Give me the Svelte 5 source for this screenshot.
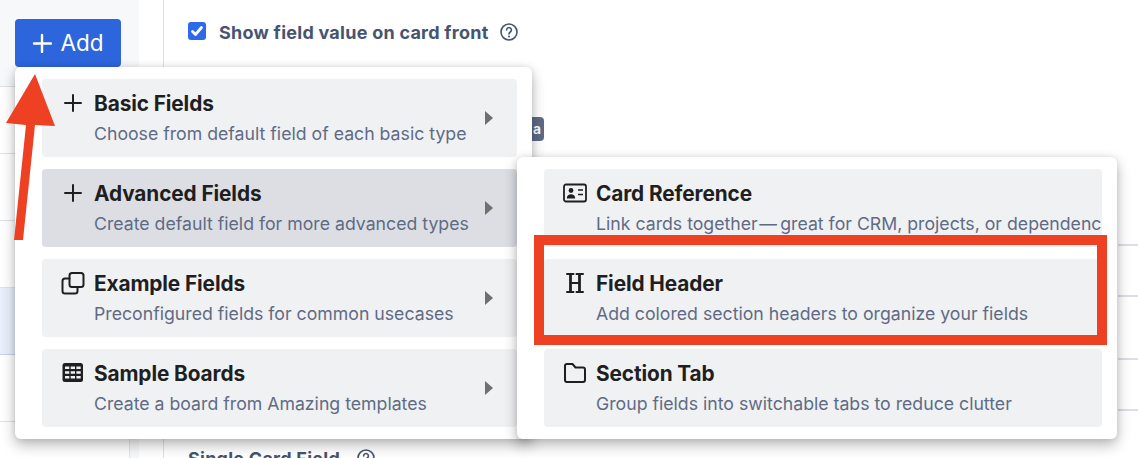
<script>
  const menu = [
    { id: 'plus', title: 'Basic Fields', sub: 'Choose from default field of each basic type' },
    { id: 'plus', title: 'Advanced Fields', sub: 'Create default field for more advanced types', active: true },
    { id: 'copy', title: 'Example Fields', sub: 'Preconfigured fields for common usecases' },
    { id: 'table', title: 'Sample Boards', sub: 'Create a board from Amazing templates' }
  ];
  const sub = [
    { id: 'card', title: 'Card Reference', sub: 'Link cards together\u200A—\u2009great for CRM, projects, or dependencies' },
    { id: 'header', title: 'Field Header', sub: 'Add colored section headers to organize your fields' },
    { id: 'folder', title: 'Section Tab', sub: 'Group fields into switchable tabs to reduce clutter' }
  ];
</script>

{#snippet icon(id)}
  <svg class="ico" viewBox="0 0 24 24" fill="none" stroke="#1f1f1f" stroke-width="2" stroke-linecap="round" stroke-linejoin="round">
    {#if id === 'plus'}
      <path d="M12 4v16M4 12h16" />
    {:else if id === 'copy'}
      <rect x="8.500" y="2" width="14" height="14" rx="2.500" />
      <path d="M8.500 7.500H4a2.500 2.500 0 0 0-2.500 2.500v10A2.500 2.500 0 0 0 4 22.500h10a2.500 2.500 0 0 0 2.500-2.500V16" />
    {:else if id === 'table'}
      <rect x="1.500" y="2" width="20.500" height="19" rx="2.500" fill="#1f1f1f" stroke="none" />
      <path d="M4 5.500h4.300v2.500H4zM9.700 5.500H14v2.500H9.700zM15.400 5.500h4.300v2.500h-4.300zM4 10.300h4.300v2.500H4zM9.700 10.300H14v2.500H9.700zM15.400 10.300h4.300v2.500h-4.300zM4 15.100h4.300v2.500H4zM9.700 15.100H14v2.500H9.700zM15.400 15.100h4.300v2.500h-4.300z" fill="#f0f1f3" stroke="none" />
    {:else if id === 'card'}
      <rect x="1" y="3.500" width="22" height="17" rx="2" stroke-width="1.800" />
      <circle cx="8" cy="9.500" r="2.400" fill="#1f1f1f" stroke="none" />
      <path d="M3.800 17.500c0-3 2-4.200 4.200-4.200s4.200 1.200 4.200 4.200z" fill="#1f1f1f" stroke="none" />
      <path d="M15 9h5M15 13.500h5" stroke-width="1.600" stroke-linecap="butt" />
    {:else if id === 'header'}
      <path d="M7.500 3v18M16.500 3v18" stroke-width="2.800" stroke-linecap="butt" />
      <path d="M7.500 12h9" stroke-width="2" stroke-linecap="butt" />
      <path d="M4 3h6.500M13.500 3H20M4 21h6.500M13.500 21H20" stroke-width="2" />
    {:else if id === 'folder'}
      <path d="M2 5.500A2 2 0 0 1 4 3h5.500l3 3.500H20a2 2 0 0 1 2 2V19a2 2 0 0 1-2 2H4a2 2 0 0 1-2-2z" />
    {/if}
  </svg>
{/snippet}

{#snippet row(item, caret)}
  <div class="item" class:active={item.active}>
    <div class="head">
      {@render icon(item.id)}
      <span class="title">{item.title}</span>
    </div>
    <div class="desc">{item.sub}</div>
    {#if caret}<span class="caret"></span>{/if}
  </div>
{/snippet}

{#snippet help()}
  <svg class="help" viewBox="0 0 18 18" fill="none" stroke="#475470" stroke-width="1.600"><circle cx="9" cy="9" r="8" /><path d="M6.600 7a2.400 2.400 0 1 1 3.700 2c-.9.600-1.300 1-1.300 2" stroke-linecap="round" /><circle cx="9" cy="13.400" r="1" fill="#475470" stroke="none" /></svg>
{/snippet}

<div class="page">
  <aside class="side">
    <div class="toolbar">
      <button class="add">
        <svg width="20" height="20" viewBox="0 0 20 20" fill="none" stroke="#fff" stroke-width="2.400" stroke-linecap="round"><path d="M10 2v17M2 10.500h17" /></svg>
        <span>Add</span>
      </button>
    </div>
    <div class="rows">
      <div class="srow"></div>
      <div class="srow"></div>
      <div class="srow"></div>
      <div class="srow sel"></div>
      <div class="srow"></div>
    </div>
  </aside>

  <main class="main">
    <div class="opt">
      <span class="check">
        <svg viewBox="0 0 18 18" width="18" height="18" fill="none" stroke="#fff" stroke-width="2.800" stroke-linecap="round" stroke-linejoin="round"><path d="M4.500 9.500l3 3 6-7" /></svg>
      </span>
      <span class="optlabel">Show field value on card front</span>
      {@render help()}
    </div>
    <div class="badge">a</div>
    <div class="opt bottom">
      <span class="optlabel">Single Card Field</span>
      {@render help()}
    </div>
    <div class="lines">
      <i class="l1"></i><i class="l2"></i><i class="l3"></i><i class="l4"></i>
    </div>
  </main>

  <div class="menu first">
    {#each menu as m}{@render row(m, true)}{/each}
  </div>
  <div class="menu second">
    {#each sub as m}{@render row(m, false)}{/each}
  </div>

  <div class="redbox"></div>
  <svg class="arrow" width="60" height="250" viewBox="0 0 60 250">
    <path d="M35 74 L6 123 L26 125 L14 240 L23 240 L35 125 L55 126 Z" fill="#ee4023" />
  </svg>
</div>

<style>
  :global(body) { margin: 0; background: #fff; }
  .page {
    position: relative;
    width: 1138px;
    height: 458px;
    overflow: hidden;
    display: flex;
    font-family: Inter, "Liberation Sans", sans-serif;
  }
  .side {
    width: 139px;
    background: #f7f8fa;
    flex: none;
    box-sizing: border-box;
  }
  .toolbar {
    height: 87px;
    padding: 19px 0 0 15px;
    box-sizing: border-box;
    border-bottom: 1px solid #dfe1e8;
  }
  .add {
    width: 106px;
    height: 48px;
    border: 0;
    border-radius: 4px;
    background: #2d65dc;
    color: #fff;
    display: flex;
    align-items: center;
    justify-content: center;
    gap: 8px;
    padding: 0 0 1px;
    font: 400 22.500px Inter, "Liberation Sans", sans-serif;
  }
  .rows { width: 130px; background: #fff; height: 371px; border-right: 1px solid #e4e6eb; box-sizing: border-box; }
  .srow { box-sizing: border-box; border-bottom: 1px solid #dfe1e8; height: 67px; }
  .sel { background: #e8effb; border-bottom-color: #c9d3e6; }
  .main {
    flex: 1;
    position: relative;
    margin-left: 24px;
    border-left: 1px solid #dfe1e8;
    background: #fff;
  }
  .opt {
    position: absolute;
    left: 24px;
    top: 20px;
    display: flex;
    align-items: center;
    gap: 11px;
    height: 24px;
  }
  .bottom { top: 446px; gap: 17px; }
  .check {
    width: 18px; height: 18px; border-radius: 3px;
    background: #2d6ae8; margin-top: -3px; margin-right: 2px;
    display: flex;
  }
  .optlabel { font-size: 18px; font-weight: 700; color: #475470; white-space: nowrap; letter-spacing: 0.250px; }
  .help { width: 18px; height: 18px; }
  .badge {
    position: absolute; left: 360px; top: 117px; width: 20px; height: 24px;
    background: #5f6b85; color: #fff; font-size: 14px; font-weight: 600; border-radius: 0 4px 4px 0;
    text-align: right; line-height: 24px; padding-right: 3px; box-sizing: border-box;
  }
  .lines i { position: absolute; left: 954px; right: 0; height: 2px; background: #dcdee5; display: block; }
  .l1 { top: 244px; } .l2 { top: 295px; } .l3 { top: 358px; } .l4 { top: 409px; }
  .menu {
    position: absolute;
    box-sizing: border-box;
    background: #fff;
    border-radius: 6px;
    box-shadow: 0 6px 14px rgba(0,0,0,.28), 0 0 6px rgba(0,0,0,.1);
    display: flex;
    flex-direction: column;
    gap: 12px;
    padding: 12px 15px 12px 27px;
  }
  .first { left: 15px; top: 67px; width: 517px; height: 372px; }
  .second { left: 517px; top: 157px; width: 600px; height: 282px; }
  .item {
    position: relative;
    height: 78px;
    flex: none;
    background: #f0f1f3;
    border-radius: 4px;
    padding: 0 0 0 52px;
    box-sizing: border-box;
    overflow: hidden;
  }
  .active { background: #dddee3; }
  .head { height: 48px; display: flex; align-items: center; margin-left: -33px; gap: 9px; box-sizing: border-box; }
  .ico { width: 24px; height: 24px; flex: none; }
  .title { font-size: 20.800px; font-weight: 700; color: #1f1f1f; white-space: nowrap; letter-spacing: -0.100px; }
  .desc { font-size: 17.700px; color: #5f6b85; white-space: nowrap; margin-top: -4px; }
  .caret {
    position: absolute; right: 24px; top: 32px; width: 0; height: 0;
    border-left: 8px solid #707070; border-top: 7px solid transparent; border-bottom: 7px solid transparent;
  }
  .redbox {
    position: absolute; left: 534px; top: 235px; width: 573px; height: 110px;
    border: 10px solid #ee4023; box-sizing: border-box;
  }
  .arrow { position: absolute; left: 0; top: 0; overflow: visible; }
</style>
